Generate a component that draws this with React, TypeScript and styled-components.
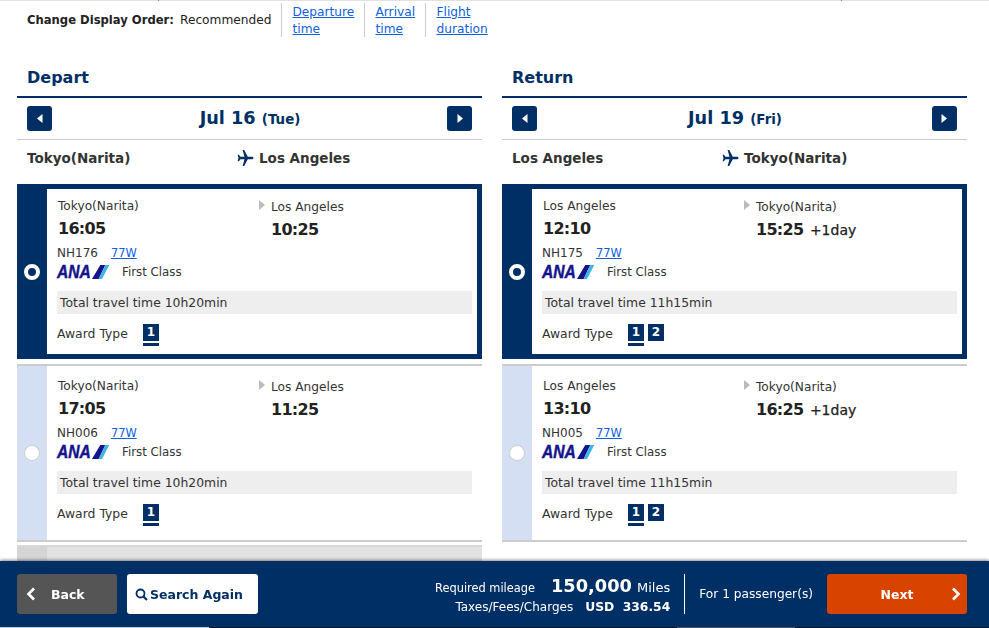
import React from "react";
import styled, { createGlobalStyle } from "styled-components";

const NAVY = "#002f66";

const Global = createGlobalStyle`
  html, body { margin: 0; padding: 0; height: 100%; overflow: hidden; background: #fff; }
  body { font-family: "DejaVu Sans", Verdana, sans-serif; color: #222; font-size: 12.4px; }
`;

const Page = styled.div`
  height: 628px;
  overflow: hidden;
`;

const TopRule = styled.div`
  height: 1px;
  background:
    linear-gradient(#8a8a8a, #8a8a8a) 158px 0 / 1px 1px no-repeat,
    linear-gradient(#8a8a8a, #8a8a8a) 841px 0 / 1px 1px no-repeat,
    #e2e2e2;
`;

const SortBar = styled.div`
  display: flex;
  align-items: center;
  height: 35px;
  margin-top: 1px;
  padding-left: 27px;
`;
const SortLabel = styled.span`
  font-weight: bold;
  font-size: 11.6px;
  margin-right: 6px;
`;
const SortCurrent = styled.span`
  font-size: 12.2px;
  margin-right: 10px;
`;
const SortLink = styled.a<{ $w: number }>`
  display: block;
  width: ${(p) => p.$w}px;
  height: 34px;
  box-sizing: border-box;
  border-left: 1px solid #ccc;
  padding: 1px 0 0 10px;
  color: #0f5fe0;
  text-decoration: underline;
  font-size: 12.2px;
  line-height: 17px;
`;

const Columns = styled.div`
  display: flex;
  gap: 20px;
  padding: 0 22px 0 17px;
  margin-top: 24px;
`;
const Column = styled.section`
  width: 465px;
  flex: none;
`;
const Title = styled.h2`
  margin: 0;
  height: 37px;
  box-sizing: border-box;
  border-bottom: 2px solid ${NAVY};
  padding-left: 10px;
  color: ${NAVY};
  font-size: 16px;
  line-height: 34px;
  font-weight: bold;
`;
const DateRow = styled.div`
  display: flex;
  align-items: center;
  justify-content: space-between;
  height: 42px;
  box-sizing: border-box;
  border-bottom: 1px solid #ccc;
  padding: 0 10px;
`;
const DateText = styled.div`
  color: ${NAVY};
  font-weight: bold;
  font-size: 17.7px;
  padding: 0 0 2px 1px;
`;
const DateDay = styled.span`
  font-size: 13.4px;
`;
const ArrowBtn = styled.button`
  width: 25px;
  height: 25px;
  padding: 0;
  border: 0;
  border-radius: 3px;
  background: ${NAVY};
  display: flex;
  align-items: center;
  justify-content: center;
`;
const RouteRow = styled.div`
  display: flex;
  align-items: center;
  height: 35px;
  padding-left: 10px;
  font-weight: bold;
  font-size: 13.5px;
  color: #333;
  margin-bottom: 9px;
`;
const RouteFrom = styled.span`
  width: 210px;
  flex: none;
`;
const RouteTo = styled.span`
  display: flex;
  align-items: center;
  gap: 5px;
`;

const Card = styled.article<{ $selected?: boolean }>`
  display: flex;
  box-sizing: border-box;
  height: ${(p) => (p.$selected ? 175 : 178)}px;
  ${(p) =>
    p.$selected
      ? `border: 5px solid ${NAVY}; border-left: 0; margin-bottom: 5px;`
      : `border-top: 2px solid #ccc; border-bottom: 2px solid #ccc;`}
`;
const Strip = styled.div<{ $selected?: boolean }>`
  width: 30px;
  flex: none;
  display: flex;
  align-items: center;
  justify-content: center;
  background: ${(p) => (p.$selected ? NAVY : "#d5dff3")};
`;
const Radio = styled.span<{ $selected?: boolean }>`
  width: 16px;
  height: 16px;
  box-sizing: border-box;
  border-radius: 50%;
  background: ${(p) => (p.$selected ? NAVY : "#fff")};
  border: ${(p) => (p.$selected ? "4px solid #fff" : "1px solid #ccc")};
`;
const Body = styled.div<{ $selected?: boolean }>`
  flex: 1;
  min-width: 0;
  box-sizing: border-box;
  padding: ${(p) => (p.$selected ? "8px 5px 0 10px" : "11px 10px 0 10px")};
`;
const Legs = styled.div`
  display: flex;
`;
const Leg = styled.div`
  width: 201px;
  flex: none;
  padding-left: 1px;
  box-sizing: border-box;
`;
const ArriveLeg = styled.div`
  position: relative;
  padding-left: 13px;
  padding-top: 1px;
`;
const Tri = styled.span`
  position: absolute;
  left: 1px;
  top: 3px;
  width: 0;
  height: 0;
  border-left: 6px solid #bbb;
  border-top: 5.5px solid transparent;
  border-bottom: 5.5px solid transparent;
`;
const Place = styled.div`
  height: 18px;
  line-height: 18px;
  font-size: 12.2px;
  color: #333;
`;
const Time = styled.div`
  height: 26px;
  line-height: 26px;
  margin-top: 1px;
  font-weight: bold;
  font-size: 16px;
  letter-spacing: -0.7px;
  color: #222;
`;
const PlusDay = styled.span`
  font-size: 14px;
  font-weight: normal;
  letter-spacing: 0;
  margin-left: 2px;
  -webkit-text-stroke: 0.25px #222;
`;
const FlightRow = styled.div`
  display: flex;
  gap: 13px;
  height: 18px;
  line-height: 18px;
  margin-top: 1px;
  font-size: 12px;
  color: #333;
`;
const Plane = styled.a`
  color: #0f5fe0;
  text-decoration: underline;
  font-size: 11.4px;
`;
const CarrierRow = styled.div`
  display: flex;
  align-items: center;
  height: 20px;
  font-size: 11.8px;
  color: #333;
`;
const Logo = styled.span`
  display: flex;
  align-items: center;
  width: 65px;
  flex: none;
`;
const LogoText = styled.span`
  display: block;
  width: 35px;
  font-family: "Liberation Sans", Arial, sans-serif;
  font-weight: bold;
  font-style: italic;
  font-size: 19px;
  line-height: 14px;
  color: #14148c;
  transform: scaleX(0.82);
  transform-origin: left center;
  -webkit-text-stroke: 0.5px #14148c;
`;
const Travel = styled.div`
  height: 23px;
  line-height: 23px;
  margin-top: 9px;
  padding-left: 3px;
  background: #eee;
  font-size: 12.4px;
  color: #333;
`;
const AwardRow = styled.div`
  display: flex;
  align-items: flex-start;
  margin-top: 10px;
  font-size: 12.4px;
  color: #333;
`;
const AwardLabel = styled.span`
  width: 86px;
  flex: none;
  line-height: 19px;
`;
const Badge = styled.span<{ $active?: boolean }>`
  width: 16px;
  height: 17px;
  margin-right: 4px;
  background: ${NAVY};
  color: #fff;
  font-weight: bold;
  font-size: 12px;
  line-height: 17px;
  text-align: center;
  position: relative;
  ${(p) =>
    p.$active
      ? `&::after { content: ""; position: absolute; left: 0; right: 0; top: 19px; height: 3px; background: ${NAVY}; }`
      : ""}
`;
const Dimmed = styled.div`
  display: flex;
  height: 20px;
  margin-top: 3px;
  border-top: 2px solid #d8d8d8;
  background: #e2e2e2;
`;
const DimStrip = styled.div`
  width: 30px;
  background: #d5d5d5;
`;

const Footer = styled.footer`
  position: fixed;
  left: 0;
  right: 0;
  bottom: 0;
  height: 67px;
  box-sizing: border-box;
  background: ${NAVY};
  box-shadow: 0 -1px 3px rgba(0, 0, 0, 0.45);
  display: flex;
  flex-direction: column;
  color: #fff;
`;
const FooterMain = styled.div`
  flex: 1;
  display: flex;
  align-items: center;
  padding: 0 22px 0 17px;
`;
const EdgeStrip = styled.div`
  height: 1px;
  display: grid;
  grid-template-columns: 209px 468px 118px 1fr;
`;
const EdgePart = styled.span<{ $c: string }>`
  background: ${(p) => p.$c};
`;
const BackBtn = styled.button`
  width: 100px;
  height: 40px;
  border: 0;
  border-radius: 3px;
  background: #555;
  color: #fff;
  font: bold 12.5px "DejaVu Sans", sans-serif;
  display: flex;
  align-items: center;
  padding: 0 0 0 9px;
  gap: 14px;
`;
const SearchBtn = styled.button`
  width: 131px;
  height: 40px;
  margin-left: 10px;
  border: 0;
  border-radius: 3px;
  background: #fff;
  color: ${NAVY};
  font: bold 12.5px "DejaVu Sans", sans-serif;
  display: flex;
  align-items: center;
  padding: 0 0 0 8px;
  gap: 2px;
  white-space: nowrap;
`;
const Totals = styled.div`
  margin-left: auto;
  text-align: right;
  padding-right: 14px;
  height: 40px;
  border-right: 1px solid #fff;
  font-size: 12px;
  white-space: nowrap;
`;
const TotalTop = styled.div`
  height: 24px;
  line-height: 24px;
  font-size: 11.4px;
`;
const TotalBottom = styled.div`
  height: 18px;
  line-height: 18px;
`;
const Big = styled.strong`
  font-size: 17.8px;
  margin: 0 5px 0 16px;
`;
const Miles = styled.span`
  font-size: 13px;
`;
const Strong = styled.strong`
  font-size: 12.3px;
  margin-left: 12px;
`;
const Passengers = styled.div`
  margin: 0 14px 0 14px;
  font-size: 12.2px;
  white-space: nowrap;
`;
const NextBtn = styled.button`
  width: 140px;
  height: 40px;
  border: 0;
  border-radius: 3px;
  background: #d84300;
  color: #fff;
  font: bold 12.5px "DejaVu Sans", sans-serif;
  position: relative;
  padding: 0;
`;
const NextIcon = styled.svg`
  position: absolute;
  right: 6px;
  top: 13px;
`;

const Caret = ({ dir }: { dir: "l" | "r" }) => (
  <svg width="6" height="9" viewBox="0 0 6 9">
    <path d={dir === "l" ? "M5.5 0v9L0 4.5z" : "M.5 0v9L6 4.5z"} fill="#fff" />
  </svg>
);

const PlaneIcon = () => (
  <svg width="17" height="16" viewBox="0 0 17 16">
    <path
      d="M16.5 8c0-.8-1-1.3-2-1.3h-3.7L7.2 0H5.6l1.9 6.7H3.4L1.9 4.8H.6l.9 3.2-.9 3.2h1.3l1.5-1.9h4.1L5.6 16h1.6l3.6-6.7h3.7c1 0 2-.5 2-1.3z"
      fill={NAVY}
    />
  </svg>
);

const AnaLogo = () => (
  <Logo>
    <LogoText>ANA</LogoText>
    <svg width="18" height="14" viewBox="0 0 18 14">
      <path d="M8.3 0h5L6.7 14H0z" fill="#14148c" />
      <path d="M13.3 0h4L10 14H6.7z" fill="#3fb4e6" />
    </svg>
  </Logo>
);

type F = {
  from: string;
  to: string;
  dep: string;
  arr: string;
  plus?: boolean;
  no: string;
  total: string;
  awards: number[];
  selected?: boolean;
};

const FlightCard = ({ f }: { f: F }) => (
  <Card $selected={f.selected}>
    <Strip $selected={f.selected}>
      <Radio $selected={f.selected} />
    </Strip>
    <Body $selected={f.selected}>
      <Legs>
        <Leg>
          <Place>{f.from}</Place>
          <Time>{f.dep}</Time>
        </Leg>
        <ArriveLeg>
          <Tri />
          <Place>{f.to}</Place>
          <Time>
            {f.arr}
            {f.plus && <PlusDay> +1day</PlusDay>}
          </Time>
        </ArriveLeg>
      </Legs>
      <FlightRow>
        <span>{f.no}</span>
        <Plane href="#">77W</Plane>
      </FlightRow>
      <CarrierRow>
        <AnaLogo />
        <span>First Class</span>
      </CarrierRow>
      <Travel>Total travel time {f.total}</Travel>
      <AwardRow>
        <AwardLabel>Award Type</AwardLabel>
        {f.awards.map((a) => (
          <Badge key={a} $active={a === 1}>
            {a}
          </Badge>
        ))}
      </AwardRow>
    </Body>
  </Card>
);

const Col = ({
  title,
  date,
  day,
  from,
  to,
  flights,
  dimmed,
}: {
  title: string;
  date: string;
  day: string;
  from: string;
  to: string;
  flights: F[];
  dimmed?: boolean;
}) => (
  <Column>
    <Title>{title}</Title>
    <DateRow>
      <ArrowBtn>
        <Caret dir="l" />
      </ArrowBtn>
      <DateText>
        {date} <DateDay>({day})</DateDay>
      </DateText>
      <ArrowBtn>
        <Caret dir="r" />
      </ArrowBtn>
    </DateRow>
    <RouteRow>
      <RouteFrom>{from}</RouteFrom>
      <RouteTo>
        <PlaneIcon />
        {to}
      </RouteTo>
    </RouteRow>
    {flights.map((f) => (
      <FlightCard key={f.no} f={f} />
    ))}
    {dimmed && (
      <Dimmed>
        <DimStrip />
      </Dimmed>
    )}
  </Column>
);

const out: F[] = [
  { from: "Tokyo(Narita)", to: "Los Angeles", dep: "16:05", arr: "10:25", no: "NH176", total: "10h20min", awards: [1], selected: true },
  { from: "Tokyo(Narita)", to: "Los Angeles", dep: "17:05", arr: "11:25", no: "NH006", total: "10h20min", awards: [1] },
];
const back: F[] = [
  { from: "Los Angeles", to: "Tokyo(Narita)", dep: "12:10", arr: "15:25", plus: true, no: "NH175", total: "11h15min", awards: [1, 2], selected: true },
  { from: "Los Angeles", to: "Tokyo(Narita)", dep: "13:10", arr: "16:25", plus: true, no: "NH005", total: "11h15min", awards: [1, 2] },
];

export default function App() {
  return (
    <Page>
      <Global />
      <TopRule />
      <SortBar>
        <SortLabel>Change Display Order:</SortLabel>
        <SortCurrent>Recommended</SortCurrent>
        <SortLink href="#" $w={83}>Departure time</SortLink>
        <SortLink href="#" $w={61}>Arrival time</SortLink>
        <SortLink href="#" $w={80}>Flight duration</SortLink>
      </SortBar>
      <Columns>
        <Col title="Depart" date="Jul 16" day="Tue" from="Tokyo(Narita)" to="Los Angeles" flights={out} dimmed />
        <Col title="Return" date="Jul 19" day="Fri" from="Los Angeles" to="Tokyo(Narita)" flights={back} />
      </Columns>
      <Footer>
        <FooterMain>
          <BackBtn>
            <svg width="11" height="14" viewBox="0 0 11 14">
              <path d="M8 1.5 2.5 7 8 12.5" fill="none" stroke="#fff" strokeWidth="2.6" />
            </svg>
            Back
          </BackBtn>
          <SearchBtn>
            <svg width="13" height="13" viewBox="0 0 13 13">
              <circle cx="5.5" cy="5.5" r="4" fill="none" stroke={NAVY} strokeWidth="1.8" />
              <path d="M8.5 8.5 12 12" stroke={NAVY} strokeWidth="2.2" />
            </svg>
            Search Again
          </SearchBtn>
          <Totals>
            <TotalTop>
              Required mileage<Big>150,000</Big>
              <Miles>Miles</Miles>
            </TotalTop>
            <TotalBottom>
              Taxes/Fees/Charges<Strong>USD&nbsp; 336.54</Strong>
            </TotalBottom>
          </Totals>
          <Passengers>For 1 passenger(s)</Passengers>
          <NextBtn>
            Next
            <NextIcon width="11" height="14" viewBox="0 0 11 14">
              <path d="M3 1.5 8.5 7 3 12.5" fill="none" stroke="#fff" strokeWidth="2.6" />
            </NextIcon>
          </NextBtn>
        </FooterMain>
        <EdgeStrip>
          <EdgePart $c="#c4cccc" />
          <EdgePart $c="#141414" />
          <EdgePart $c="#555" />
          <EdgePart $c="#141414" />
        </EdgeStrip>
      </Footer>
    </Page>
  );
}
